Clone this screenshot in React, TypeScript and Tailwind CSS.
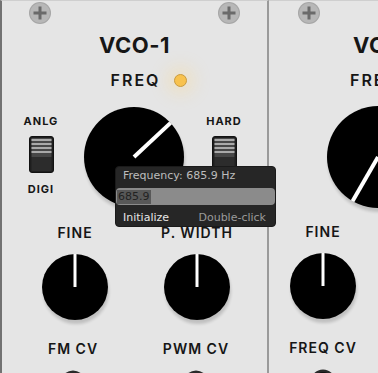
import React from 'react';

const label = "font-['Inter',sans-serif] text-[#161616] whitespace-nowrap";

const Screw: React.FC = () => (
  <svg width="22" height="22" viewBox="0 0 22 22">
    <circle cx="11" cy="11" r="11" fill="#a6a6a6" />
    <circle cx="11" cy="11" r="10" fill="#b7b7b7" />
    <path d="M11 4.5v13M4.5 11h13" stroke="#6a6a6a" strokeWidth="3" />
  </svg>
);

// angle in degrees, 0 = straight up, clockwise
const Knob: React.FC<{ r: number; angle: number; stroke: number }> = ({ r, angle, stroke }) => {
  const rad = (angle * Math.PI) / 180;
  const x2 = r + Math.sin(rad) * r;
  const y2 = r - Math.cos(rad) * r;
  const fid = `sh${r}`;
  return (
    <svg width={r * 2} height={r * 2} style={{ overflow: 'visible' }}>
      <defs>
        <filter id={fid} x="-20%" y="-20%" width="140%" height="140%">
          <feGaussianBlur stdDeviation="1.5" />
        </filter>
      </defs>
      <circle cx={r + 1} cy={r + 4} r={r} fill="#000" opacity="0.16" filter={`url(#${fid})`} />
      <circle cx={r} cy={r} r={r} fill="#000" />
      <line x1={r} y1={r} x2={x2} y2={y2} stroke="#fff" strokeWidth={stroke} />
    </svg>
  );
};

const Switch: React.FC = () => (
  <svg width="25" height="37" viewBox="0 0 25 37">
    <rect x="0.5" y="0.5" width="24" height="36" rx="2.5" fill="#1e1e1e" stroke="#121212" />
    <rect x="2.5" y="2" width="20" height="19" fill="#474747" />
    {[3, 7, 11, 15].map((y) => (
      <rect key={y} x="2.5" y={y} width="20" height="2" fill="#a9a9a9" />
    ))}
    <rect x="2.5" y="21" width="20" height="14" fill="#2c2c2c" />
  </svg>
);

const Jack: React.FC = () => (
  <svg width="26" height="26" viewBox="0 0 26 26">
    <circle cx="13" cy="13" r="12.5" fill="#2a2a2a" />
    <circle cx="13" cy="13" r="10" fill="#111" />
  </svg>
);

const Led: React.FC = () => (
  <div className="w-[13px] h-[13px] rounded-full bg-[#f8c24e] border border-[#c99b3f] shadow-[0_0_16px_8px_rgba(255,214,130,0.28)]" />
);

const Cell: React.FC<{ children: React.ReactNode; className?: string }> = ({ children, className = '' }) => (
  <div className={`w-[90px] flex justify-center ${className}`}>{children}</div>
);

export default function App() {
  return (
    <div className="relative flex w-[378px] h-[373px] overflow-hidden bg-[#e5e5e5]">
      {/* VCO-1 */}
      <div className="w-[269px] shrink-0 flex flex-col border-t border-t-[#cfcfcf] border-l-2 border-l-[#727272] border-r-2 border-r-[#9a9a9a]">
        <div className="flex justify-between pl-[27px] pr-[27px] pt-[1px]">
          <Screw />
          <Screw />
        </div>
        <div className={`${label} mt-[8px] h-[26px] leading-[26px] text-center text-[22px] font-bold tracking-[0.5px]`}>VCO-1</div>
        <div className="mt-[12px] h-[20px] grid grid-cols-[1fr_auto_1fr] items-center">
          <div />
          <div className={`${label} text-[16px] leading-[20px] font-semibold tracking-[2px] pl-[2px]`}>FREQ</div>
          <div className="pl-[14px]"><Led /></div>
        </div>
        <div className="mt-[17px] flex h-[100px]">
          <div className="w-[78px] flex flex-col items-center pt-[7px]">
            <div className={`${label} text-[11px] leading-[14px] font-bold tracking-[1px]`}>ANLG</div>
            <div className="mt-[8px]"><Switch /></div>
            <div className={`${label} mt-[9px] text-[11px] leading-[14px] font-bold tracking-[1px]`}>DIGI</div>
          </div>
          <div className="ml-[4px] w-[100px]">
            <Knob r={50} angle={47} stroke={4} />
          </div>
          <div className="w-[78px] flex flex-col items-center pt-[7px] pl-[2px]">
            <div className={`${label} text-[11px] leading-[14px] font-bold tracking-[1px]`}>HARD</div>
            <div className="mt-[8px]"><Switch /></div>
          </div>
        </div>
        <div className="mt-[18px] flex h-[16px]">
          <Cell className="ml-[28px]"><span className={`${label} text-[14px] leading-[16px] font-semibold tracking-[1px]`}>FINE</span></Cell>
          <Cell className="ml-[32px]"><span className={`${label} text-[14px] leading-[16px] font-semibold tracking-[1px]`}>P. WIDTH</span></Cell>
        </div>
        <div className="mt-[13px] flex">
          <Cell className="ml-[28px]"><Knob r={33} angle={0} stroke={3} /></Cell>
          <Cell className="ml-[32px]"><Knob r={33} angle={0} stroke={3} /></Cell>
        </div>
        <div className="mt-[21px] flex h-[16px]">
          <Cell className="ml-[26px]"><span className={`${label} text-[14px] leading-[16px] font-semibold tracking-[1px]`}>FM CV</span></Cell>
          <Cell className="ml-[33px]"><span className={`${label} text-[14px] leading-[16px] font-semibold tracking-[1px]`}>PWM CV</span></Cell>
        </div>
        <div className="mt-[13px] flex">
          <Cell className="ml-[26px]"><Jack /></Cell>
          <Cell className="ml-[33px]"><Jack /></Cell>
        </div>
      </div>

      {/* next module */}
      <div className="w-[230px] shrink-0 flex flex-col border-t border-t-[#cfcfcf]">
        <div className="flex pl-[29px] pt-[1px]">
          <Screw />
        </div>
        <div className={`${label} mt-[8px] h-[26px] leading-[26px] pl-[84px] text-[22px] font-bold tracking-[0.5px]`}>VCO-2</div>
        <div className={`${label} mt-[12px] h-[20px] leading-[20px] pl-[81px] text-[16px] font-semibold tracking-[2px]`}>FREQ</div>
        <div className="mt-[16px] h-[101px] pl-[58px]">
          <Knob r={51} angle={210} stroke={4} />
        </div>
        <div className="mt-[17px] flex h-[16px]">
          <Cell className="ml-[9px]"><span className={`${label} text-[14px] leading-[16px] font-semibold tracking-[1px]`}>FINE</span></Cell>
        </div>
        <div className="mt-[13px] flex">
          <Cell className="ml-[9px]"><Knob r={33} angle={0} stroke={3} /></Cell>
        </div>
        <div className="mt-[21px] flex h-[16px]">
          <Cell className="ml-[9px]"><span className={`${label} text-[14px] leading-[16px] font-semibold tracking-[1px]`}>FREQ CV</span></Cell>
        </div>
        <div className="mt-[13px] flex">
          <Cell className="ml-[9px]"><Jack /></Cell>
        </div>
      </div>

      {/* parameter tooltip / context field */}
      <div className="absolute left-[115px] top-[166px] w-[161px] h-[61px] rounded-[4px] bg-[#262626] border border-[#1a1a1a] font-['DejaVu_Sans',sans-serif] text-[11px] leading-[14px] flex flex-col">
        <div className="pt-[2px] pl-[7px] text-[#bdbdbd]">Frequency: 685.9 Hz</div>
        <div className="mt-[5px] mx-[0px] h-[17px] rounded-[4px] bg-[#8b8b8b] flex items-center pl-[1px]">
          <span className="bg-[#585858] text-[#222] px-[1px] leading-[14px]">685.9</span>
        </div>
        <div className="mt-[6px] flex justify-between pl-[7px] pr-[9px]">
          <span className="text-[#e6e6e6]">Initialize</span>
          <span className="text-[#9a9a9a]">Double-click</span>
        </div>
      </div>
    </div>
  );
}
